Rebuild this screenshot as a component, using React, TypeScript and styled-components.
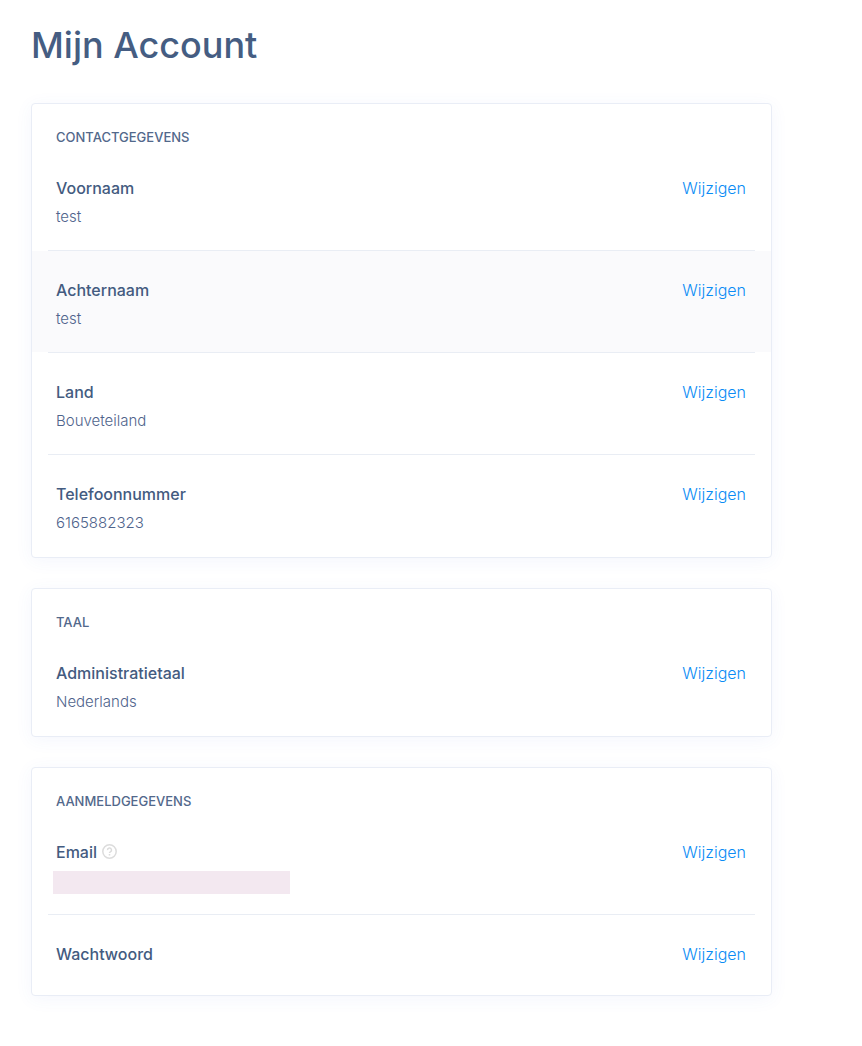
import React from "react";
import styled, { createGlobalStyle } from "styled-components";

const Global = createGlobalStyle`
  *, *::before, *::after { box-sizing: border-box; }
  body { margin: 0; background: #fff; font-family: Inter, "Liberation Sans", sans-serif; color: #435b80; }
`;
const Page = styled.main`padding: 20px 90px 50px 31px;`;
const Title = styled.h1`
  margin: 0 0 33px; font-size: 36px; line-height: 50px; font-weight: 500; color: #455d82;
`;
const Cards = styled.div`display: grid; gap: 30px;`;
const Card = styled.section`
  padding-bottom: 1px;
  border: 1px solid #e9edf6; border-radius: 4px; background: #fff;
  box-shadow: 0 3px 18px rgba(60, 110, 220, 0.06);
`;
const CardTitle = styled.h2`
  margin: 0; padding: 23px 24px 2px; font-size: 13px; line-height: 20px; font-weight: 500;
  text-transform: uppercase; color: #52688b;
`;
const Rows = styled.div``;
const Row = styled.div<{ $active?: boolean }>`
  display: flex; justify-content: space-between; align-items: flex-start;
  min-height: 79px; padding: 25px 25px 19px 24px;
  background: ${(p) => (p.$active ? "#fafafc" : "transparent")};
`;
const Divider = styled.hr`
  height: 1px; margin: 0 16px; border: 0; background: #e9edf4;
`;
const Field = styled.dl`margin: 0;`;
const Label = styled.dt`
  display: flex; align-items: center; gap: 5px; margin-bottom: 1px;
  font-size: 16px; line-height: 28px; font-weight: 500;
`;
const Value = styled.dd`
  display: flow-root; margin: 0; font-size: 15px; line-height: 28px; font-weight: 300; color: #4f648c;
`;
const Redacted = styled.span`
  display: block; width: 237px; height: 23px; margin: 4px 0 1px -3px; background: #f3e8f0;
`;
const Edit = styled.a`
  font-size: 16px; line-height: 28px; font-weight: 300; color: #0a8cf5; text-decoration: none;
`;
const Help = styled.svg`display: block; margin-bottom: 2px;`;
const HelpIcon = () => (
  <Help width="15" height="15" viewBox="0 0 15 15" fill="none" stroke="#dcdcdc" strokeWidth="1.5" role="img" aria-label="Help">
    <circle cx="7.5" cy="7.5" r="6.7" />
    <path d="M5.5 6.1a2 2 0 1 1 2.9 1.7c-.6.3-.9.6-.9 1.2M7.5 10v1.5" />
  </Help>
);

type FieldData = { label: string; value?: string; active?: boolean; help?: boolean; redacted?: boolean };
const groups: { title: string; fields: FieldData[] }[] = [
  { title: "Contactgegevens", fields: [
    { label: "Voornaam", value: "test" },
    { label: "Achternaam", value: "test", active: true },
    { label: "Land", value: "Bouveteiland" },
    { label: "Telefoonnummer", value: "6165882323" },
  ] },
  { title: "Taal", fields: [{ label: "Administratietaal", value: "Nederlands" }] },
  { title: "Aanmeldgegevens", fields: [
    { label: "Email", help: true, redacted: true },
    { label: "Wachtwoord" },
  ] },
];

export default function App() {
  return (
    <Page>
      <Global />
      <Title>Mijn Account</Title>
      <Cards>
        {groups.map((g) => (
          <Card key={g.title}>
            <CardTitle>{g.title}</CardTitle>
            <Rows>
              {g.fields.map((f, i) => (
                <React.Fragment key={f.label}>
                  {i > 0 && <Divider />}
                  <Row $active={f.active}>
                    <Field>
                      <Label>{f.label}{f.help && <HelpIcon />}</Label>
                      {f.value && <Value>{f.value}</Value>}
                      {f.redacted && <Value><Redacted /></Value>}
                    </Field>
                    <Edit href="#" aria-label={`Wijzigen ${f.label}`}>Wijzigen</Edit>
                  </Row>
                </React.Fragment>
              ))}
            </Rows>
          </Card>
        ))}
      </Cards>
    </Page>
  );
}
